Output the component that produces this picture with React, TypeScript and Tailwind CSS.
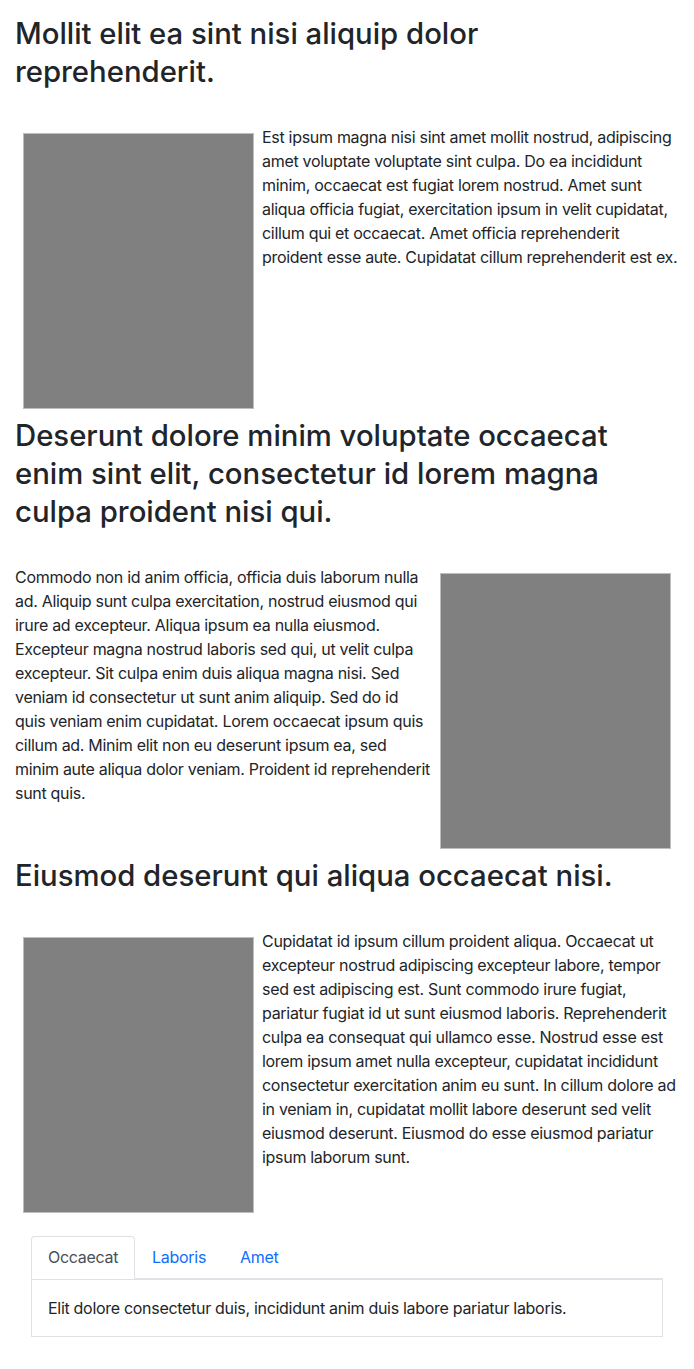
const sections = [
  {
    title: "Mollit elit ea sint nisi aliquip dolor reprehenderit.",
    text: "Est ipsum magna nisi sint amet mollit nostrud, adipiscing amet voluptate voluptate sint culpa. Do ea incididunt minim, occaecat est fugiat lorem nostrud. Amet sunt aliqua officia fugiat, exercitation ipsum in velit cupidatat, cillum qui et occaecat. Amet officia reprehenderit proident esse aute. Cupidatat cillum reprehenderit est ex.",
    side: "left",
  },
  {
    title: "Deserunt dolore minim voluptate occaecat enim sint elit, consectetur id lorem magna culpa proident nisi qui.",
    text: "Commodo non id anim officia, officia duis laborum nulla ad. Aliquip sunt culpa exercitation, nostrud eiusmod qui irure ad excepteur. Aliqua ipsum ea nulla eiusmod. Excepteur magna nostrud laboris sed qui, ut velit culpa excepteur. Sit culpa enim duis aliqua magna nisi. Sed veniam id consectetur ut sunt anim aliquip. Sed do id quis veniam enim cupidatat. Lorem occaecat ipsum quis cillum ad. Minim elit non eu deserunt ipsum ea, sed minim aute aliqua dolor veniam. Proident id reprehenderit sunt quis.",
    side: "right",
  },
  {
    title: "Eiusmod deserunt qui aliqua occaecat nisi.",
    text: "Cupidatat id ipsum cillum proident aliqua. Occaecat ut excepteur nostrud adipiscing excepteur labore, tempor sed est adipiscing est. Sunt commodo irure fugiat, pariatur fugiat id ut sunt eiusmod laboris. Reprehenderit culpa ea consequat qui ullamco esse. Nostrud esse est lorem ipsum amet nulla excepteur, cupidatat incididunt consectetur exercitation anim eu sunt. In cillum dolore ad in veniam in, cupidatat mollit labore deserunt sed velit eiusmod deserunt. Eiusmod do esse eiusmod pariatur ipsum laborum sunt.",
    side: "left",
  },
];

function Placeholder() {
  return <div className="m-2 h-[276px] w-[231px] shrink-0 border border-[#bdbdbd] bg-[#808080]" />;
}

export default function App() {
  const tabs = ["Occaecat", "Laboris", "Amet"];
  return (
    <div className="min-h-screen bg-white px-[15px] pt-[15px] font-['Inter',sans-serif] text-[16px] leading-6 tracking-[-0.3px] text-[#212529]">
      {sections.map((s) => (
        <section key={s.title}>
          <h2 className="mb-[34px] text-[29.3px] font-medium leading-[38px] tracking-normal">{s.title}</h2>
          <div className="flex items-start">
            {s.side === "left" && <Placeholder />}
            <p className="flex-1">{s.text}</p>
            {s.side === "right" && <Placeholder />}
          </div>
        </section>
      ))}

      <div className="mt-[15px] px-4">
        <div className="flex border-b border-[#dee2e6]">
          {tabs.map((t, i) => (
            <div
              key={t}
              className={
                i === 0
                  ? "-mb-px rounded-t border border-[#dee2e6] border-b-transparent bg-white px-4 py-2 text-[#495057]"
                  : "border border-transparent px-4 py-2 text-[#0d6efd]"
              }
            >
              {t}
            </div>
          ))}
        </div>
        <div className="border border-[#dee2e6] p-4">
          Elit dolore consectetur duis, incididunt anim duis labore pariatur laboris.
        </div>
      </div>
    </div>
  );
}
